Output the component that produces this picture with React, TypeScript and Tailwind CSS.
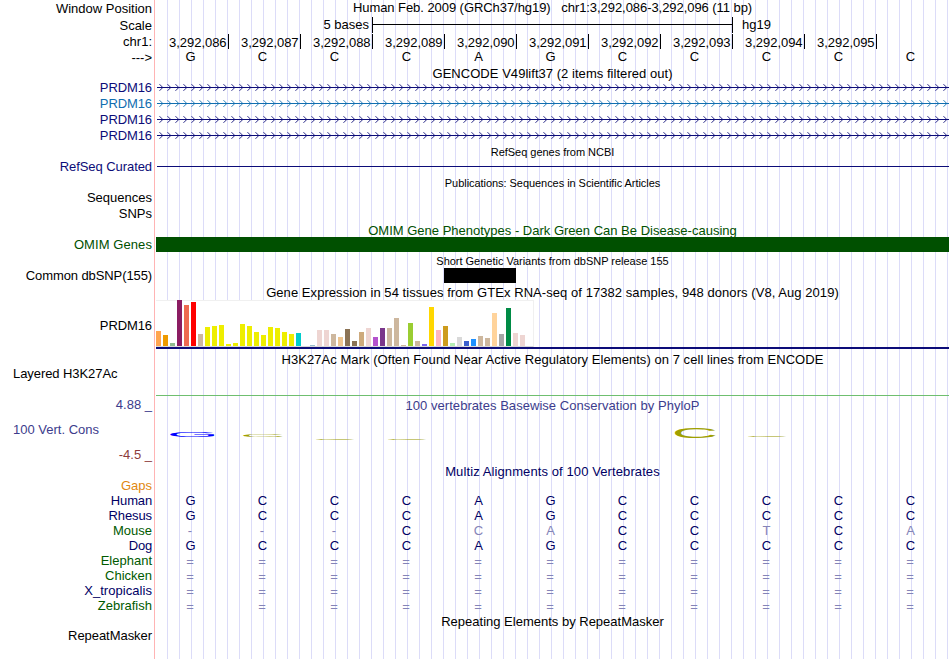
import clsx from "clsx";

type Label = { text: string; className: string };

const labels: Label[] = [
  { text: "Window Position", className: "h-4" },
  { text: "Scale", className: "h-[17px]" },
  { text: "chr1:", className: "h-4" },
  { text: "--->", className: "h-4" },
  { text: "PRDM16", className: "h-[30px] tracking-[-0.1px] text-[#0c0c78]" },
  { text: "PRDM16", className: "h-4 tracking-[-0.1px] text-[#106eb0]" },
  { text: "PRDM16", className: "h-4 tracking-[-0.1px] text-[#0c0c78]" },
  { text: "PRDM16", className: "h-4 tracking-[-0.1px] text-[#0c0c78]" },
  { text: "RefSeq Curated", className: "h-[31px] tracking-[-0.07px] text-[#0c0c78]" },
  { text: "Sequences", className: "h-[31px]" },
  { text: "SNPs", className: "h-4" },
  { text: "OMIM Genes", className: "h-[31px] tracking-[0.08px] text-[#005000]" },
  { text: "Common dbSNP(155)", className: "h-[31px] tracking-[-0.1px]" },
  { text: "PRDM16", className: "h-[50px] tracking-[-0.1px]" },
  { text: "Layered H3K27Ac", className: "h-12 self-start pl-[13px] tracking-[-0.07px]" },
  { text: "4.88 _", className: "h-[31px] text-[#3c3c8c]" },
  { text: "100 Vert. Cons", className: "h-[25px] self-start pl-[13px] text-[#3c3c8c]" },
  { text: "-4.5 _", className: "h-[25px] text-[#8c3c3c]" },
  { text: "Gaps", className: "h-[31px] text-[#e1870f]" },
  { text: "Human", className: "h-[15px] tracking-[-0.15px] text-[#000064]" },
  { text: "Rhesus", className: "h-[15px] tracking-[-0.1px] text-[#000064]" },
  { text: "Mouse", className: "h-[15px] text-[#005a00]" },
  { text: "Dog", className: "h-[15px] tracking-[-0.2px] text-[#000064]" },
  { text: "Elephant", className: "h-[15px] text-[#005a00]" },
  { text: "Chicken", className: "h-[15px] text-[#005a00]" },
  { text: "X_tropicalis", className: "h-[15px] tracking-[0.05px] text-[#000064]" },
  { text: "Zebrafish", className: "h-[15px] text-[#005a00]" },
  { text: "RepeatMasker", className: "h-[30px] tracking-[-0.05px]" },
];

const positions = [
  "3,292,086",
  "3,292,087",
  "3,292,088",
  "3,292,089",
  "3,292,090",
  "3,292,091",
  "3,292,092",
  "3,292,093",
  "3,292,094",
  "3,292,095",
];

const reference = "GCCCAGCCCCC";

const alignments = [
  "GCCCAGCCCCC",
  "GCCCAGCCCCC",
  "---CCACCTCA",
  "GCCCAGCCCCC",
  "===========",
  "===========",
  "===========",
  "===========",
];

// median expression per tissue: [height in px, tissue colour]
const tissues: [number, string][] = [
  [15, "#ffa54f"], [11, "#ee9a00"], [3, "#8fbc8f"], [46, "#8b1c62"],
  [41, "#ee6a50"], [44, "#ff0000"], [12, "#cdb79e"], [19, "#eeee00"],
  [20, "#eeee00"], [21, "#eeee00"], [2, "#eeee00"], [3, "#eeee00"],
  [22, "#eeee00"], [20, "#eeee00"], [14, "#eeee00"], [11, "#eeee00"],
  [19, "#eeee00"], [18, "#eeee00"], [14, "#eeee00"], [12, "#eeee00"],
  [13, "#00cdcd"], [0, "#ee82ee"], [1, "#9ac0cd"], [16, "#eed5d2"],
  [16, "#eed5d2"], [12, "#cdb79e"], [9, "#eec591"], [17, "#8b7355"],
  [5, "#8b7355"], [14, "#cdaa7d"], [18, "#eed5d2"], [9, "#b452cd"],
  [18, "#7a378b"], [18, "#cdb79e"], [28, "#cdb79e"], [1, "#cdb79e"],
  [23, "#9acd32"], [5, "#cdb79e"], [2, "#7a67ee"], [39, "#ffd700"],
  [16, "#ffb6c1"], [20, "#cd9b1d"], [3, "#b4eeb4"], [9, "#d9d9d9"],
  [5, "#3a5fcd"], [7, "#1e90ff"], [10, "#cdb79e"], [8, "#cdb79e"],
  [33, "#ffd39b"], [12, "#a6a6a6"], [38, "#008b45"], [13, "#eed5d2"],
  [11, "#eed5d2"], [0, "#ff00ff"],
];

// conservation logo: letter, left, top, width, height
const logo: [string, number, number, number, number][] = [
  ["G", 14, 19, 43, 5],
  ["C", 87, 21, 40, 3],
  ["C", 160, 25.2, 39, 1.6],
  ["C", 232, 25.2, 39, 1.6],
  ["C", 519, 14, 41, 11],
  ["C", 592, 22.2, 39, 1.6],
];

function Title({ text, className }: { text: string; className: string }) {
  return (
    <div className={clsx("flex items-end justify-center whitespace-pre", className)}>
      {text}
    </div>
  );
}

function Bases({ sequence, className }: { sequence: string; className?: string }) {
  return (
    <div className={clsx("flex h-[15px]", className)}>
      {sequence.split("").map((base, i) => (
        <span
          key={i}
          className={clsx(
            "w-[72px] shrink-0 text-center",
            base === "=" ? "pt-px pr-1" : base === "-" ? "pr-1" : "pr-[3px]",
            base !== reference[i] && "text-[#8484b8]",
          )}
        >
          {base}
        </span>
      ))}
    </div>
  );
}

function Transcript({ className }: { className: string }) {
  return (
    <svg width="793" height="16" className={clsx("block fill-none", className)}>
      <path d="M1 6.5H793" stroke="currentColor" shapeRendering="crispEdges" />
      {Array.from({ length: 99 }, (_, i) => (
        <path
          key={i}
          d={`M${3.5 + i * 8} 3.2l3.3 3.3l-3.3 3.3`}
          stroke="currentColor"
          strokeWidth="0.9"
        />
      ))}
    </svg>
  );
}

function Expression() {
  return (
    <div className="flex h-[47px] w-[378px] items-end gap-0.5 border-t border-r border-b border-t-[#f0f0f0] border-r-[#f0f0f0] border-b-[#d8d8d8] bg-white">
      {tissues.map(([height, color], i) => (
        <div
          key={i}
          className="w-[5px] shrink-0"
          style={{ height, backgroundColor: color }}
        />
      ))}
    </div>
  );
}

function Logo() {
  return (
    <svg width="793" height="50" className="block">
      {logo.map(([letter, x, y, w, h], i) => (
        <text
          key={i}
          transform={`translate(${x} ${y}) scale(${w / 64} ${h / 71})`}
          x="-5"
          y="70"
          fontSize="100"
          fill={letter === "G" ? "#0000ff" : "#a0a000"}
        >
          {letter}
        </text>
      ))}
    </svg>
  );
}

export default function App() {
  return (
    <div className="flex h-[659px] w-[949px] overflow-hidden bg-white font-['Liberation_Sans',Arial,sans-serif] text-[13px] leading-[15px] text-black">
      <div className="flex w-[154px] shrink-0 flex-col items-end pr-0.5">
        {labels.map((label, i) => (
          <div
            key={i}
            className={clsx("flex shrink-0 items-end whitespace-pre", label.className)}
          >
            {label.text}
          </div>
        ))}
      </div>

      <div className="mr-px w-px shrink-0 bg-[#ffb4b4]" />

      <div className="w-[793px] shrink-0 bg-[linear-gradient(to_right,transparent_11px,#dcdcf8_11px)] bg-[length:12px_100%]">
        <Title
          className="h-[15px] tracking-[-0.06px]"
          text="Human Feb. 2009 (GRCh37/hg19)   chr1:3,292,086-3,292,096 (11 bp)"
        />
        <div className="flex h-[18px] pt-0.5">
          <span className="w-[216px] pr-[3px] text-right">5 bases</span>
          <div className="h-4 w-[361px] border-x border-black">
            <div className="h-2 border-b border-black" />
          </div>
          <span className="pl-[9px]">hg19</span>
        </div>
        <div className="flex h-4 pt-px pl-px">
          {positions.map((position) => (
            <span
              key={position}
              className="h-[15px] w-[72px] shrink-0 border-r border-black pt-px pr-[1.5px] text-right tracking-[-0.05px]"
            >
              {position}
            </span>
          ))}
        </div>
        <Bases sequence={reference} />

        <Title
          className="h-[17px] tracking-[0.04px]"
          text="GENCODE V49lift37 (2 items filtered out)"
        />
        <Transcript className="text-[#0c0c78]" />
        <Transcript className="text-[#106eb0]" />
        <Transcript className="text-[#0c0c78]" />
        <Transcript className="text-[#0c0c78]" />

        <Title
          className="h-[15px] text-[11px] tracking-[-0.03px]"
          text="RefSeq genes from NCBI"
        />
        <div className="ml-px h-[7px] border-b border-[#0c0c78]" />
        <Title
          className="h-6 text-[11px] tracking-[-0.05px]"
          text="Publications: Sequences in Scientific Articles"
        />

        <Title
          className="-mb-px h-[47px] text-[#005000]"
          text="OMIM Gene Phenotypes - Dark Green Can Be Disease-causing"
        />
        <div className="h-[15px] bg-[#005000]" />

        <Title
          className="-mb-px h-[17px] text-[11px] tracking-[-0.02px]"
          text="Short Genetic Variants from dbSNP release 155"
        />
        <div className="ml-[288px] h-[15px] w-[72px] bg-black" />

        <Title
          className="h-[17px] tracking-[0.06px]"
          text="Gene Expression in 54 tissues from GTEx RNA-seq of 17382 samples, 948 donors (V8, Aug 2019)"
        />
        <Expression />
        <div className="h-0.5 bg-[#0c0c78]" />

        <Title
          className="h-[18px] tracking-[0.05px]"
          text="H3K27Ac Mark (Often Found Near Active Regulatory Elements) on 7 cell lines from ENCODE"
        />
        <div className="h-[29px] border-b border-[#6fbf6f]" />

        <Title
          className="h-[17px] tracking-[0.04px] text-[#3c3c8c]"
          text="100 vertebrates Basewise Conservation by PhyloP"
        />
        <Logo />

        <Title
          className="h-4 tracking-[0.1px] text-[#000064]"
          text="Multiz Alignments of 100 Vertebrates"
        />
        <div className="h-3.5" />
        {alignments.map((sequence, i) => (
          <Bases key={i} sequence={sequence} className="text-[#000064]" />
        ))}

        <Title className="h-4" text="Repeating Elements by RepeatMasker" />
      </div>
    </div>
  );
}
